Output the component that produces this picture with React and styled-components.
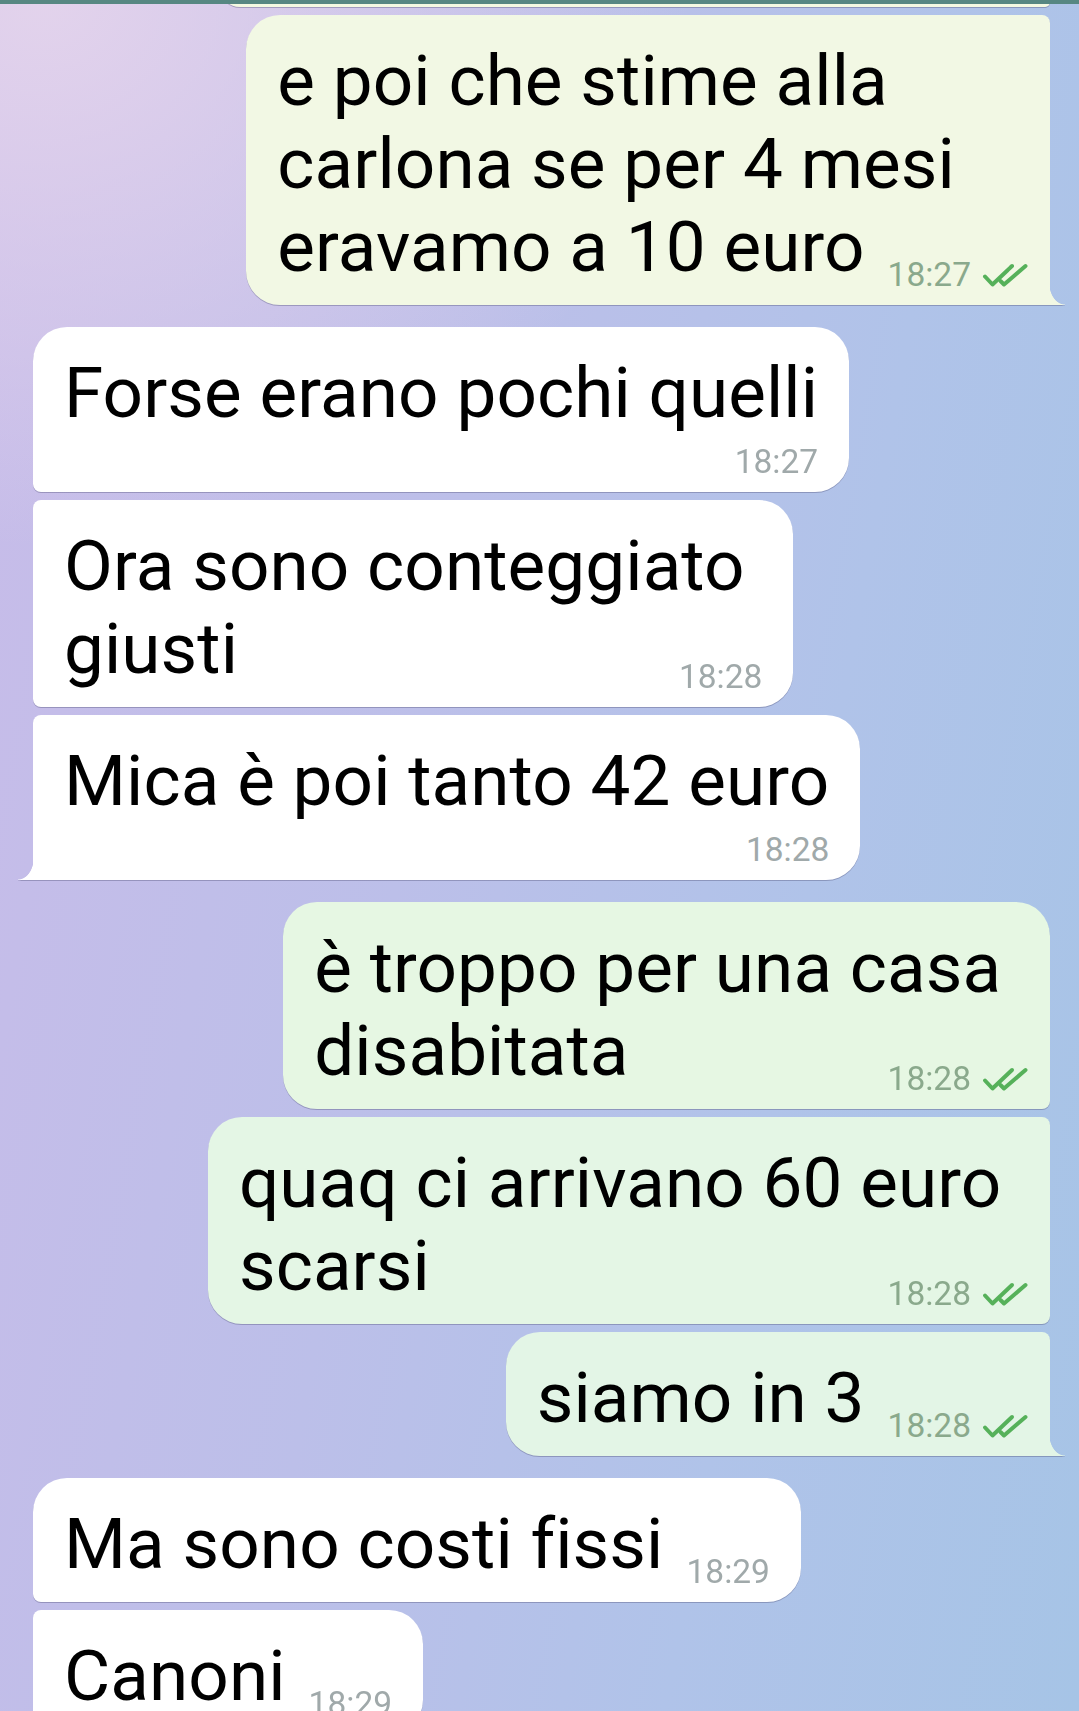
import React from "react";
import styled, { createGlobalStyle, css } from "styled-components";

const GlobalStyle = createGlobalStyle`
  html, body { margin: 0; padding: 0; }
  body {
    width: 1079px;
    height: 1711px;
    overflow: hidden;
    font-family: Roboto, "Noto Sans", "Liberation Sans", sans-serif;
  }
`;

const Screen = styled.div`
  position: relative;
  width: 1079px;
  height: 1711px;
  overflow: hidden;
  background:
    radial-gradient(ellipse 60% 32% at 4% 0%, rgba(228, 212, 236, 0.95), rgba(228, 212, 236, 0) 100%),
    linear-gradient(100deg, #c8bce9 0%, #bcbfe9 40%, #b0c3e9 70%, #a6c4e6 100%);
`;

const AppBarEdge = styled.div`
  position: absolute;
  top: 0;
  left: 0;
  right: 0;
  height: 4px;
  background: #578782;
  z-index: 2;
`;

const Chat = styled.div`
  display: flex;
  flex-direction: column;
  gap: 22px;
  padding: 0 29px 0 33px;
  margin-top: -33px;
`;

const Group = styled.div`
  display: flex;
  flex-direction: column;
  gap: 8px;
  align-items: ${(p) => (p.$out ? "flex-end" : "flex-start")};
`;

const BIG = 34;
const SMALL = 8;

const Bubble = styled.div`
  position: relative;
  box-sizing: border-box;
  padding: 24px 31px 17px;
  background: ${(p) => p.$bg};
  color: #000;
  font-size: 71px;
  line-height: 83px;
  letter-spacing: 0.1px;
  filter: drop-shadow(0 1px 0.6px rgba(70, 70, 110, 0.35));
  ${(p) =>
    p.$out
      ? css`
          border-radius: ${BIG}px ${p.$first ? BIG : SMALL}px ${p.$last ? 0 : SMALL}px ${BIG}px;
        `
      : css`
          border-radius: ${p.$first ? BIG : SMALL}px ${BIG}px ${BIG}px ${p.$last ? 0 : SMALL}px;
        `}
  ${(p) =>
    p.$last &&
    css`
      &::after {
        content: "";
        position: absolute;
        bottom: 0;
        width: 16px;
        height: 22px;
        background: inherit;
        ${p.$out ? "right: -15px;" : "left: -15px;"}
        -webkit-mask: radial-gradient(16px 22px at ${p.$out ? "100% 0" : "0 0"}, transparent 96%, #000 100%);
        mask: radial-gradient(16px 22px at ${p.$out ? "100% 0" : "0 0"}, transparent 96%, #000 100%);
      }
    `}
`;

/* the earlier message, scrolled up under the app bar: only its bottom edge shows */
const PeekBubble = styled(Bubble)`
  width: 830px;
  height: 40px;
  padding: 0;
`;

const Line = styled.span`
  display: block;
  white-space: pre;
`;

const LastLine = styled.div`
  display: flex;
  align-items: flex-end;
  justify-content: space-between;
  gap: 23px;
`;

const MetaRow = styled.div`
  display: flex;
  justify-content: flex-end;
  margin-top: 14px;
`;

const Meta = styled.div`
  display: flex;
  align-items: flex-end;
  gap: 11px;
  font-size: 33.5px;
  line-height: 27px;
  letter-spacing: 0;
  white-space: nowrap;
  color: ${(p) => (p.$out ? "#8aa98c" : "#a0a9aa")};
  margin-right: ${(p) => (p.$out ? "-9px" : "0")};
`;

const CheckIcon = styled.svg`
  display: block;
  width: 46px;
  height: 25px;
  flex: none;
`;

function DoubleCheck() {
  return (
    <CheckIcon viewBox="0 0 46 25" fill="none" stroke="#56b15a" strokeWidth="4" strokeLinecap="round" strokeLinejoin="round">
      <path d="M3 13.5 L10.5 21.5 L30 3" />
      <path d="M18.5 18 L22 21.5 L43.5 3" />
    </CheckIcon>
  );
}

function Message({ m, first, last }) {
  const lead = m.lines.slice(0, -1);
  const tail = m.lines[m.lines.length - 1];
  const meta = (
    <Meta $out={m.out}>
      <span>{m.time}</span>
      {m.out && <DoubleCheck />}
    </Meta>
  );
  return (
    <Bubble $out={m.out} $first={first} $last={last} $bg={m.bg || "#ffffff"}>
      {lead.map((l, i) => (
        <Line key={i}>{l}</Line>
      ))}
      {m.below ? (
        <>
          <Line>{tail}</Line>
          <MetaRow>{meta}</MetaRow>
        </>
      ) : (
        <LastLine>
          <Line>{tail}</Line>
          {meta}
        </LastLine>
      )}
    </Bubble>
  );
}

const groups = [
  {
    out: true,
    continuesAbove: true,
    messages: [
      {
        lines: ["e poi che stime alla ", "carlona se per 4 mesi ", "eravamo a 10 euro"],
        time: "18:27",
        bg: "#f2f8e4",
      },
    ],
  },
  {
    out: false,
    messages: [
      { lines: ["Forse erano pochi quelli"], time: "18:27", below: true },
      { lines: ["Ora sono conteggiato ", "giusti"], time: "18:28" },
      { lines: ["Mica è poi tanto 42 euro"], time: "18:28", below: true },
    ],
  },
  {
    out: true,
    messages: [
      { lines: ["è troppo per una casa ", "disabitata"], time: "18:28", bg: "#e6f7e3" },
      { lines: ["quaq ci arrivano 60 euro ", "scarsi"], time: "18:28", bg: "#e4f6e5" },
      { lines: ["siamo in 3"], time: "18:28", bg: "#e3f5e6" },
    ],
  },
  {
    out: false,
    continuesBelow: true,
    messages: [
      { lines: ["Ma sono costi fissi"], time: "18:29" },
      { lines: ["Canoni"], time: "18:29" },
    ],
  },
];

export default function App() {
  return (
    <>
      <GlobalStyle />
      <Screen>
        <AppBarEdge />
        <Chat>
          {groups.map((g, gi) => (
            <Group key={gi} $out={g.out}>
              {g.continuesAbove && <PeekBubble $out $bg="#f4f9e2" aria-hidden="true" />}
              {g.messages.map((m, mi) => (
                <Message
                  key={mi}
                  m={{ ...m, out: g.out }}
                  first={mi === 0 && !g.continuesAbove}
                  last={mi === g.messages.length - 1 && !g.continuesBelow}
                />
              ))}
            </Group>
          ))}
        </Chat>
      </Screen>
    </>
  );
}
